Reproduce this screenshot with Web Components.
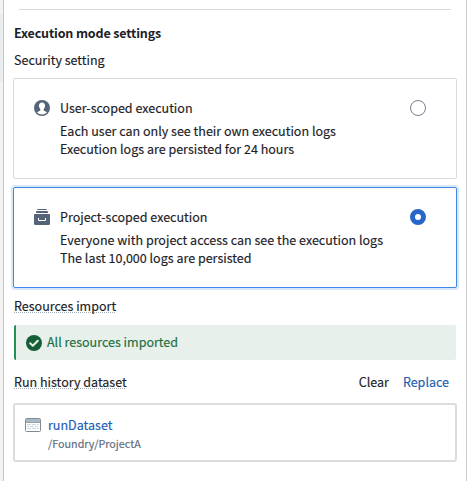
<!DOCTYPE html>
<html lang="en"><head><meta charset="utf-8"><title>Execution mode settings</title>
<style>
html,body{margin:0;height:100%;background:#fff}
body{font:12.53px/18px "Noto Sans CJK SC","Noto Sans CJK JP",sans-serif;color:#1c2127;-webkit-text-stroke:.15px;overflow:hidden}
</style></head><body>
<settings-panel></settings-panel>
<script>
const define=(name,html)=>customElements.define(name,class extends HTMLElement{
  constructor(){super();this.attachShadow({mode:'open'}).innerHTML=html;}
});

define('help-label',`<style>:host{display:block;white-space:nowrap}
span{text-decoration:underline dotted #a3adba 1px;text-underline-offset:1px;text-decoration-skip-ink:none}</style><span><slot></slot></span>`);

define('radio-mark',`<style>:host{display:block;box-sizing:border-box;width:16px;height:16px;border-radius:50%;border:1px solid #738091;background:#fff}
:host([checked]){border:5px solid #2866c8}</style>`);

define('option-card',`<style>
:host{display:grid;box-sizing:border-box;height:101px;grid-template-columns:16px 1fr 16px;column-gap:10px;padding:20px 30px 0 20px;border:1px solid #d9dadb;border-radius:2px;align-items:start}
:host([selected]){border-color:#4286e8;box-shadow:0 0 0 2px #d9e7fb}
.t{height:18px;margin-bottom:5px}
slot[name=icon]{display:block;height:16px;margin-top:1px}
slot[name=radio]::slotted(*){margin-top:1px}
</style><slot name="icon"></slot><div><div class="t"><slot name="title"></slot></div><div class="d"><slot></slot></div></div><slot name="radio"></slot>`);

define('user-icon',`<style>:host,svg{display:block}</style><svg width="16" height="16" viewBox="0 0 16 16"><circle cx="8" cy="8" r="8" fill="#56647a"/><path fill="#fff" d="M8 2.400c-2 0-3.100 1.300-3 3.300-.3.900.1 1.400.5 1.800.1.700.4 1.300.9 1.800.1.700 0 1.200-.5 1.500-.9.500-2.100.7-3 1.400A6.700 6.700 0 0 0 8 14.600a6.700 6.700 0 0 0 5.100-2.400c-.9-.7-2.100-.9-3-1.400-.5-.3-.6-.8-.5-1.500.5-.5.8-1.100.9-1.800.4-.4.8-.9.500-1.800.1-2-1-3.300-3-3.300z"/></svg>`);

define('projects-icon',`<style>:host,svg{display:block}</style><svg width="16" height="16" viewBox="0 0 16 16" fill="#56647a"><path d="M4 0h8q1 0 1 1H3q0-1 1-1zM3 2h10q1 0 1 1v1H2V3q0-1 1-1z"/><path d="M1 5h14q1 0 1 1v8.500q0 1.500-1.500 1.500h-13Q0 16 0 14.500V6q0-1 1-1z"/><path d="M4.500 9v2.500h7V9" fill="none" stroke="#fff" stroke-width="1" stroke-linejoin="round"/></svg>`);

define('success-banner',`<style>:host{display:flex;align-items:center;gap:5px;box-sizing:border-box;height:35px;padding:0 9px;border-left:2px solid #239054;border-radius:2px;background:#e7f0eb;color:#1c6e42}svg{flex:none;margin-left:1px}span{margin-top:-1px}</style>
<svg width="16" height="16" viewBox="0 0 16 16"><circle cx="8" cy="8" r="8" fill="#165e38"/><path d="M4.200 8.300l2.600 2.500L11.800 5.800" fill="none" stroke="#e7f0eb" stroke-width="2" stroke-linecap="round" stroke-linejoin="round"/></svg><span><slot></slot></span>`);

define('dataset-card',`<style>:host{display:flex;box-sizing:border-box;height:59px;border:2px solid #dcdcdc;border-radius:3px;padding:11px 10px 0;gap:7px}svg{flex:none;margin-top:2px}.n{color:#215db0}.p{font-size:10.78px;line-height:16px;padding-top:1px;color:#5f6b7c}</style>
<svg width="16" height="14" viewBox="0 0 16 14"><rect x=".5" y=".5" width="15" height="13" rx="1" fill="#fff" stroke="#858a8f"/><path d="M1 1h14v3H1z" fill="#a9bac7"/><path d="M1 4.500h14" stroke="#95a2ad"/><path d="M2 6.500h4m1 0h4m1 0h2M2 8.500h2m1 0h4m1 0h3M2 10.500h4m1 0h4m1 0h2" stroke="#ccd6de"/></svg>
<div><div class="n"><slot name="name"></slot></div><div class="p"><slot name="path"></slot></div></div>`);

define('settings-panel',`<style>
:host{display:grid;grid-template-columns:3px 1fr 9px;height:100%;min-height:481px;background:#fff}
.edge{background:linear-gradient(#f2f2f3 0 14px,#eaedee 14px 82px,#f2f2f3 82px)}
main{display:flex;flex-direction:column;box-sizing:border-box;min-width:0;padding:9px 9px 0;border-left:1px solid #c5c6c8;border-right:1px solid #c8cfd5}
hr{width:432px;height:1px;border:0;margin:0 0 14px 6px;background:#d9dadb}
h2{font:inherit;font-weight:700;letter-spacing:-.15px;-webkit-text-stroke:0;margin:0 1px 9px}
.sec{margin:0 1px 9px}
option-card+option-card{margin-top:8px}
.res{margin:9px 1px 10px}
success-banner{margin:0 1px}
.row{display:flex;margin:13px 8px 12px 1px}
.row help-label{flex:1}.row b{font-weight:400;margin-left:14px}.row .link{color:#215db0}
</style><div class="edge"></div><main><hr>
<h2>Execution mode settings</h2><div class="sec">Security setting</div>
<option-card><user-icon slot="icon"></user-icon><span slot="title">User-scoped execution</span>Each user can only see their own execution logs<br>Execution logs are persisted for 24 hours<radio-mark slot="radio"></radio-mark></option-card>
<option-card selected><projects-icon slot="icon"></projects-icon><span slot="title">Project-scoped execution</span>Everyone with project access can see the execution logs<br>The last 10,000 logs are persisted<radio-mark slot="radio" checked></radio-mark></option-card>
<help-label class="res">Resources import</help-label>
<success-banner>All resources imported</success-banner>
<div class="row"><help-label>Run history dataset</help-label><b>Clear</b><b class="link">Replace</b></div>
<dataset-card><span slot="name">runDataset</span><span slot="path">/Foundry/ProjectA</span></dataset-card>
</main><div></div>`);
</script></body></html>
